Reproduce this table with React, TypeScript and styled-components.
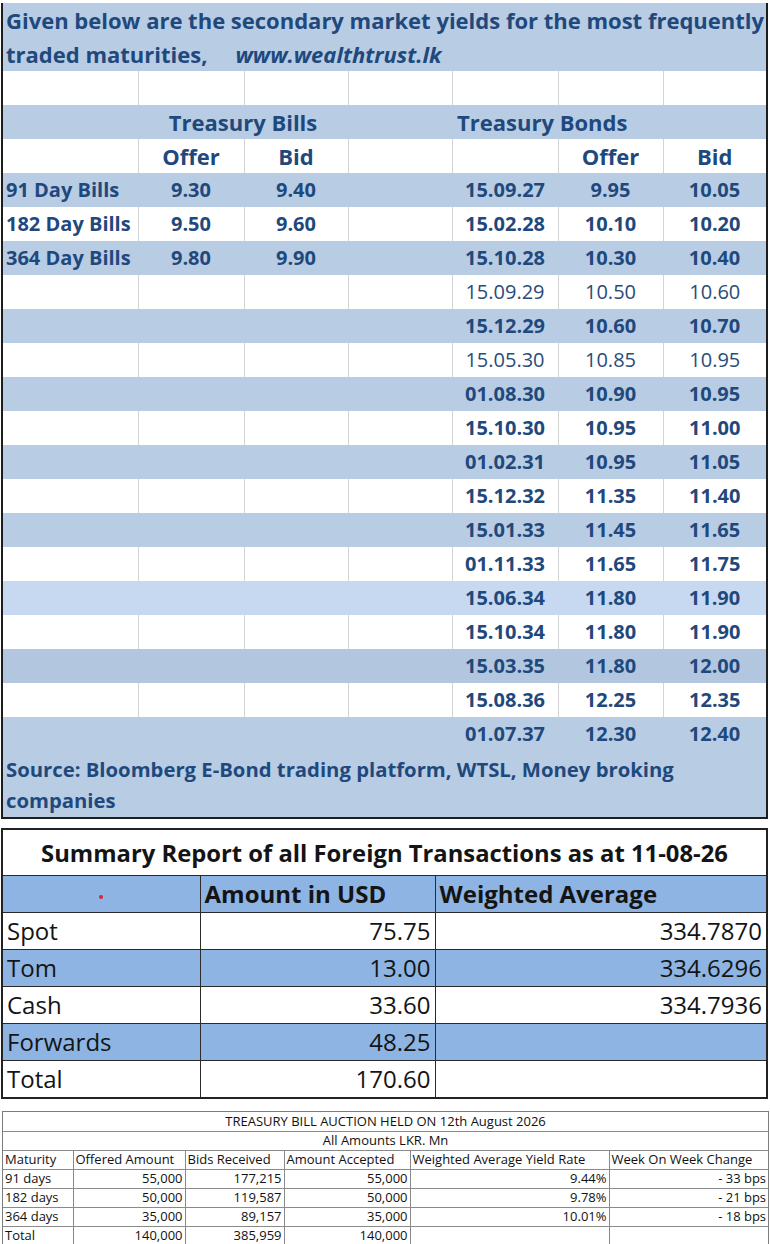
import React from "react";
import styled, { createGlobalStyle, css } from "styled-components";

const Global = createGlobalStyle`
  html, body { margin: 0; padding: 0; background: #ffffff; }
  body { font-family: "Open Sans", "Lato", "Liberation Sans", sans-serif; }
  * { box-sizing: border-box; }
`;

const FONT = `"Open Sans", "Lato", "Liberation Sans", sans-serif`;

const Page = styled.main`
  width: 770px;
  display: flex;
  flex-direction: column;
  align-items: flex-start;
  padding-left: 1px;
`;

/* ---------- Secondary market yields ---------- */

type Tone = "white" | "blue" | "pale" | "deep";
const toneBg: Record<Tone, string> = {
  white: "#ffffff",
  blue: "#b8cce4",
  pale: "#c6d9f0",
  deep: "#b2c6df",
};

const YieldFrame = styled.section`
  margin-top: 3px;
  width: 767px;
  border: 2px solid #1d1d1d;
  border-top: 0;
`;

const YieldTable = styled.table`
  width: 763px;
  border-collapse: collapse;
  table-layout: fixed;
  font-family: ${FONT};
  color: #1f497d;
`;

const YRow = styled.tr<{ $tone: Tone }>`
  height: 34px;
  background: ${(p) => toneBg[p.$tone]};
  ${(p) =>
    p.$tone === "white" &&
    css`
      & > td + td {
        border-left: 1px solid #d4d4d4;
      }
    `}
`;

const YCell = styled.td<{ $align?: "left" | "center"; $light?: boolean }>`
  height: 34px;
  padding: 0 ${(p) => (p.$align === "left" ? "3px" : "5px")};
  font-size: 20px;
  line-height: 34px;
  font-weight: ${(p) => (p.$light ? 400 : 700)};
  color: ${(p) => (p.$light ? "#2a4c78" : "#1f497d")};
  text-align: ${(p) => p.$align ?? "center"};
  white-space: nowrap;
  overflow: hidden;
  vertical-align: middle;
`;

const HeadCell = styled(YCell)`
  font-size: 22px;
  padding-left: ${(p) => (p.$align === "left" ? "5px" : "2px")};
  padding-right: 2px;
`;

const Intro = styled.td`
  height: 67px;
  padding: 0 3px;
  background: ${toneBg.blue};
  font-size: 22px;
  font-weight: 700;
  line-height: 34px;
  white-space: nowrap;
  vertical-align: top;
`;

const Url = styled.em`
  margin-left: 28px;
  font-style: italic;
`;

const Source = styled.td`
  height: 66px;
  padding: 3px 3px 0;
  background: ${toneBg.blue};
  font-size: 20.3px;
  font-weight: 700;
  line-height: 31px;
  white-space: nowrap;
  vertical-align: top;
`;

/* ---------- Summary of foreign transactions ---------- */

const SummaryFrame = styled.section`
  margin-top: 9px;
  width: 767px;
  border: 2px solid #222222;
`;

const SummaryTable = styled.table`
  width: 763px;
  border-collapse: collapse;
  table-layout: fixed;
  font-family: ${FONT};
  color: #141414;
`;

const SummaryTitle = styled.th`
  height: 45px;
  padding: 1px 0 0;
  font-size: 23.8px;
  font-weight: 700;
  text-align: center;
  white-space: nowrap;
`;

const SRow = styled.tr<{ $shade?: boolean }>`
  height: 37px;
  background: ${(p) => (p.$shade ? "#8db4e2" : "#ffffff")};
  & > td,
  & > th {
    border-top: 1px solid #2b2b2b;
  }
  & > td + td,
  & > th + th {
    border-left: 1px solid #2b2b2b;
  }
`;

const SHead = styled.th<{ $center?: boolean }>`
  padding: 0 4px;
  font-size: 24px;
  font-weight: 700;
  text-align: ${(p) => (p.$center ? "center" : "left")};
  white-space: nowrap;
`;

const SCell = styled.td<{ $num?: boolean }>`
  padding: 0 4px;
  font-size: 24px;
  font-weight: 400;
  text-align: ${(p) => (p.$num ? "right" : "left")};
  white-space: nowrap;
`;

const Mark = styled.span`
  display: inline-block;
  width: 4px;
  height: 4px;
  border-radius: 50%;
  background: #e0213a;
  vertical-align: middle;
`;

/* ---------- Treasury bill auction ---------- */

const AuctionFrame = styled.section`
  margin: 12px 0 0 1px;
  width: 767px;
  border: 1px solid #7c7c7c;
`;

const AuctionTable = styled.table`
  width: 765px;
  border-collapse: collapse;
  table-layout: fixed;
  font-family: ${FONT};
  font-size: 13px;
  color: #111111;
`;

const ARow = styled.tr`
  height: 19px;
  & + & > td {
    border-top: 1px solid #8a8a8a;
  }
  & > td + td {
    border-left: 1px solid #8a8a8a;
  }
`;

const ACell = styled.td<{ $num?: boolean; $center?: boolean }>`
  padding: 0 2px;
  line-height: 17px;
  text-align: ${(p) => (p.$center ? "center" : p.$num ? "right" : "left")};
  white-space: nowrap;
  overflow: hidden;
`;

/* ---------- Data ---------- */

const bills = [
  { name: "91 Day Bills", offer: "9.30", bid: "9.40" },
  { name: "182 Day Bills", offer: "9.50", bid: "9.60" },
  { name: "364 Day Bills", offer: "9.80", bid: "9.90" },
];

type Bond = { date: string; offer: string; bid: string; light?: boolean; tone?: Tone };

const bonds: Bond[] = [
  { date: "15.09.27", offer: "9.95", bid: "10.05" },
  { date: "15.02.28", offer: "10.10", bid: "10.20" },
  { date: "15.10.28", offer: "10.30", bid: "10.40" },
  { date: "15.09.29", offer: "10.50", bid: "10.60", light: true },
  { date: "15.12.29", offer: "10.60", bid: "10.70" },
  { date: "15.05.30", offer: "10.85", bid: "10.95", light: true },
  { date: "01.08.30", offer: "10.90", bid: "10.95" },
  { date: "15.10.30", offer: "10.95", bid: "11.00" },
  { date: "01.02.31", offer: "10.95", bid: "11.05" },
  { date: "15.12.32", offer: "11.35", bid: "11.40" },
  { date: "15.01.33", offer: "11.45", bid: "11.65" },
  { date: "01.11.33", offer: "11.65", bid: "11.75" },
  { date: "15.06.34", offer: "11.80", bid: "11.90", tone: "pale" },
  { date: "15.10.34", offer: "11.80", bid: "11.90" },
  { date: "15.03.35", offer: "11.80", bid: "12.00", tone: "deep" },
  { date: "15.08.36", offer: "12.25", bid: "12.35" },
  { date: "01.07.37", offer: "12.30", bid: "12.40" },
];

const fx = [
  { label: "Spot", amount: "75.75", avg: "334.7870" },
  { label: "Tom", amount: "13.00", avg: "334.6296", shade: true },
  { label: "Cash", amount: "33.60", avg: "334.7936" },
  { label: "Forwards", amount: "48.25", avg: "", shade: true },
  { label: "Total", amount: "170.60", avg: "" },
];

const auction = [
  ["91 days", "55,000", "177,215", "55,000", "9.44%", "- 33 bps"],
  ["182 days", "50,000", "119,587", "50,000", "9.78%", "- 21 bps"],
  ["364 days", "35,000", "89,157", "35,000", "10.01%", "- 18 bps"],
  ["Total", "140,000", "385,959", "140,000", "", ""],
];

/* ---------- Sections ---------- */

function YieldSection() {
  return (
    <YieldFrame>
      <YieldTable>
        <colgroup>
          <col style={{ width: 135 }} />
          <col style={{ width: 106 }} />
          <col style={{ width: 104 }} />
          <col style={{ width: 104 }} />
          <col style={{ width: 106 }} />
          <col style={{ width: 105 }} />
          <col style={{ width: 103 }} />
        </colgroup>
        <tbody>
          <tr>
            <Intro colSpan={7}>
              Given below are the secondary market yields for the most frequently
              <br />
              traded maturities,<Url>www.wealthtrust.lk</Url>
            </Intro>
          </tr>
          <YRow $tone="white">
            {Array.from({ length: 7 }, (_, i) => (
              <YCell key={i} />
            ))}
          </YRow>
          <YRow $tone="blue">
            <YCell />
            <HeadCell colSpan={2}>Treasury Bills</HeadCell>
            <YCell />
            <HeadCell colSpan={3} $align="left">
              Treasury Bonds
            </HeadCell>
          </YRow>
          <YRow $tone="white">
            <YCell />
            <HeadCell>Offer</HeadCell>
            <HeadCell>Bid</HeadCell>
            <YCell />
            <YCell />
            <HeadCell>Offer</HeadCell>
            <HeadCell>Bid</HeadCell>
          </YRow>
          {bonds.map((b, i) => {
            const bill = bills[i];
            const tone: Tone = b.tone ?? (i % 2 === 0 ? "blue" : "white");
            return (
              <YRow key={b.date} $tone={tone}>
                <YCell $align="left">{bill?.name}</YCell>
                <YCell>{bill?.offer}</YCell>
                <YCell>{bill?.bid}</YCell>
                <YCell />
                <YCell $light={b.light}>{b.date}</YCell>
                <YCell $light={b.light}>{b.offer}</YCell>
                <YCell $light={b.light}>{b.bid}</YCell>
              </YRow>
            );
          })}
          <tr>
            <Source colSpan={7}>
              Source: Bloomberg E-Bond trading platform, WTSL, Money broking
              <br />
              companies
            </Source>
          </tr>
        </tbody>
      </YieldTable>
    </YieldFrame>
  );
}

function SummarySection() {
  return (
    <SummaryFrame>
      <SummaryTable>
        <colgroup>
          <col style={{ width: 197 }} />
          <col style={{ width: 235 }} />
          <col style={{ width: 331 }} />
        </colgroup>
        <thead>
          <tr>
            <SummaryTitle colSpan={3}>
              Summary Report of all Foreign Transactions as at 11-08-26
            </SummaryTitle>
          </tr>
          <SRow $shade>
            <SHead $center>
              <Mark />
            </SHead>
            <SHead>Amount in USD</SHead>
            <SHead>Weighted Average</SHead>
          </SRow>
        </thead>
        <tbody>
          {fx.map((r) => (
            <SRow key={r.label} $shade={r.shade}>
              <SCell>{r.label}</SCell>
              <SCell $num>{r.amount}</SCell>
              <SCell $num>{r.avg}</SCell>
            </SRow>
          ))}
        </tbody>
      </SummaryTable>
    </SummaryFrame>
  );
}

function AuctionSection() {
  return (
    <AuctionFrame>
      <AuctionTable>
        <colgroup>
          <col style={{ width: 70 }} />
          <col style={{ width: 112 }} />
          <col style={{ width: 99 }} />
          <col style={{ width: 126 }} />
          <col style={{ width: 199 }} />
          <col style={{ width: 159 }} />
        </colgroup>
        <tbody>
          <ARow>
            <ACell colSpan={6} $center>
              TREASURY BILL AUCTION HELD ON 12th August 2026
            </ACell>
          </ARow>
          <ARow>
            <ACell colSpan={6} $center>
              All Amounts LKR. Mn
            </ACell>
          </ARow>
          <ARow>
            <ACell>Maturity</ACell>
            <ACell>Offered Amount</ACell>
            <ACell>Bids Received</ACell>
            <ACell>Amount Accepted</ACell>
            <ACell>Weighted Average Yield Rate</ACell>
            <ACell>Week On Week Change</ACell>
          </ARow>
          {auction.map((r) => (
            <ARow key={r[0]}>
              {r.map((v, i) => (
                <ACell key={i} $num={i > 0}>
                  {v}
                </ACell>
              ))}
            </ARow>
          ))}
        </tbody>
      </AuctionTable>
    </AuctionFrame>
  );
}

export default function App() {
  return (
    <>
      <Global />
      <Page>
        <YieldSection />
        <SummarySection />
        <AuctionSection />
      </Page>
    </>
  );
}
